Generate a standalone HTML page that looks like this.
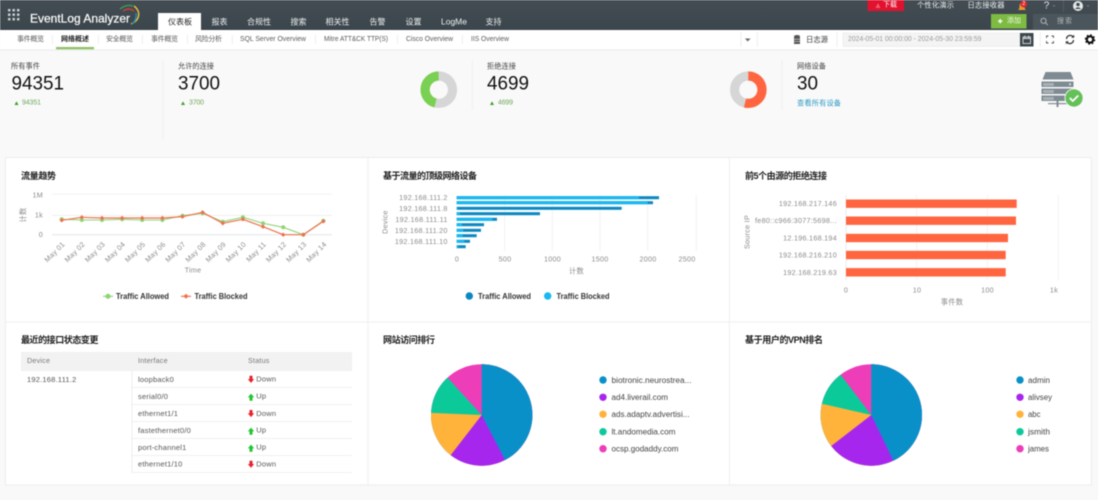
<!DOCTYPE html>
<html lang="zh"><head><meta charset="utf-8"><title>EventLog Analyzer</title>
<style>
html,body{margin:0;padding:0;width:1098px;height:500px;overflow:hidden;background:#f9f9f9}
svg{display:block;filter:blur(.42px)}
text{font-family:"Liberation Sans","Noto Sans CJK SC",sans-serif;dominant-baseline:central}
.n{font-size:8px;fill:#eef1f2}.sb{font-size:7px;fill:#5a5a5a}
.st{font-size:7.2px;fill:#444}.big{font-size:19px;fill:#111}.gr{font-size:7px;fill:#6fa85a}
.t{font-size:9px;font-weight:bold;fill:#1c1c1c}.ax{font-size:7.2px;fill:#8a8a8a;letter-spacing:.28px}
.lg{font-size:8px;fill:#333;font-weight:bold}.td{font-size:7.5px;fill:#555;letter-spacing:.2px}.th{font-size:7.2px;fill:#777;letter-spacing:.2px}
.pl{font-size:8px;fill:#444}
</style></head><body>
<svg width="1098" height="500" viewBox="0 0 1098 500" xmlns="http://www.w3.org/2000/svg">
<defs><linearGradient id="hd" x1="0" y1="0" x2="0" y2="1"><stop offset="0" stop-color="#434d53"/><stop offset="1" stop-color="#3b464c"/></linearGradient></defs>
<rect width="1098" height="500" fill="#f9f9f9"/>
<!-- header -->
<rect width="1098" height="30" fill="url(#hd)"/>
<g fill="#cfd4d6"><rect x="8" y="9" width="2.4" height="2.4"/><rect x="12.5" y="9" width="2.4" height="2.4"/><rect x="17" y="9" width="2.4" height="2.4"/><rect x="8" y="13.5" width="2.4" height="2.4"/><rect x="12.5" y="13.5" width="2.4" height="2.4"/><rect x="17" y="13.5" width="2.4" height="2.4"/><rect x="8" y="18" width="2.4" height="2.4"/><rect x="12.5" y="18" width="2.4" height="2.4"/><rect x="17" y="18" width="2.4" height="2.4"/></g>
<text x="30" y="18.5" font-size="12px" fill="#fff" stroke="#fff" stroke-width=".2" textLength="100" lengthAdjust="spacingAndGlyphs">EventLog Analyzer</text>
<g fill="none" stroke-width="1.4"><path d="M131 24Q140 20 138.500 12Q137 8 134 6" stroke="#e8c43a"/><path d="M120 9Q126 4 133 6" stroke="#3d9a5b"/><path d="M123 11Q129 7 134 11" stroke="#c9413b"/><path d="M132 24Q137 20 136 13" stroke="#2a87b8"/></g>
<rect x="158" y="13" width="43" height="17" fill="#fff"/>
<text x="168" y="22" font-size="8px" fill="#222" textLength="24">仪表板</text>
<text class="n" x="211.500" y="22" textLength="16">报表</text><text class="n" x="247" y="22" textLength="24">合规性</text><text class="n" x="290.500" y="22" textLength="16">搜索</text><text class="n" x="325.500" y="22" textLength="24">相关性</text><text class="n" x="369.500" y="22" textLength="16">告警</text><text class="n" x="405.500" y="22" textLength="16">设置</text><text class="n" x="441" y="22" textLength="26" lengthAdjust="spacingAndGlyphs">LogMe</text><text class="n" x="485.500" y="22" textLength="16">支持</text>
<!-- header right -->
<rect x="867.500" y="0" width="36.500" height="11" fill="#e0122f"/><path d="M878 3l2.500 5h-5z" fill="#f05a6a"/>
<text x="883" y="5" font-size="7px" fill="#fff" textLength="14">下载</text>
<text x="917" y="5" font-size="7.300px" fill="#eef1f2" textLength="37">个性化演示</text>
<text x="967.500" y="5" font-size="7.300px" fill="#eef1f2" textLength="37">日志接收器</text>
<path d="M1018 10q1.500-1 1.500-4t2.500-3.500q2.500.5 2.500 3.500t1.500 4z" fill="#e99a2b"/><circle cx="1023.800" cy="4" r="3.400" fill="#e0242f"/><text x="1023.800" y="4" font-size="5.500px" fill="#fff" text-anchor="middle">2</text>
<text x="1046.500" y="6" font-size="10px" fill="#e8ecee" text-anchor="middle">?</text><rect x="1053" y="5.500" width="2" height=".8" fill="#8a959a"/>
<rect x="1063" y="0" width=".8" height="12" fill="#566167"/>
<circle cx="1078" cy="6" r="5" fill="#e6eaec"/><circle cx="1078" cy="4.500" r="1.800" fill="#3f4a50"/><path d="M1074.800 9q3.200-3.500 6.400 0z" fill="#3f4a50"/><rect x="1087" y="5.500" width="2" height=".8" fill="#8a959a"/>
<rect x="991" y="14" width="35.500" height="14.500" fill="#7dbb42"/>
<path d="M998 21.200h4.400M1000.200 19v4.400" stroke="#fff" stroke-width="1.300"/>
<text x="1007" y="21.200" font-size="7px" fill="#f2f9ea" textLength="14">添加</text>
<rect x="1033" y="14" width="65" height="15.500" fill="#4b565c"/>
<circle cx="1043.500" cy="20.800" r="2.600" fill="none" stroke="#aab2b6"/><path d="M1045.500 22.800l2.200 2.200" stroke="#aab2b6"/>
<text x="1057" y="21.500" font-size="7px" fill="#aeb5b9" textLength="15">搜索</text>
<!-- subnav -->
<rect y="30" width="1098" height="19.500" fill="#fff"/><rect y="49.500" width="1098" height=".8" fill="#e6e6e6"/>
<g fill="#e8e8e8"><rect x="52" y="35" width=".7" height="9"/><rect x="98" y="35" width=".7" height="9"/><rect x="142" y="35" width=".7" height="9"/><rect x="187" y="35" width=".7" height="9"/><rect x="232" y="35" width=".7" height="9"/><rect x="315" y="35" width=".7" height="9"/><rect x="397" y="35" width=".7" height="9"/><rect x="462" y="35" width=".7" height="9"/><rect x="740.500" y="32" width=".7" height="15"/><rect x="757" y="32" width=".7" height="15"/><rect x="836.700" y="32" width=".7" height="15"/><rect x="1040" y="32" width=".7" height="15"/></g>
<text class="sb" x="17" y="39.500" textLength="27">事件概览</text>
<text x="61" y="39.500" font-size="7px" font-weight="bold" fill="#222" textLength="28">网络概述</text>
<rect x="56" y="47" width="38" height="2.300" fill="#8ec063"/>
<text class="sb" x="106" y="39.500" textLength="27">安全概览</text><text class="sb" x="151" y="39.500" textLength="27">事件概览</text><text class="sb" x="195" y="39.500" textLength="27">风险分析</text>
<text class="sb" x="240" y="39.500" textLength="66" lengthAdjust="spacingAndGlyphs">SQL Server Overview</text>
<text class="sb" x="324" y="39.500" textLength="64" lengthAdjust="spacingAndGlyphs">Mitre ATT&amp;CK TTP(S)</text>
<text class="sb" x="406" y="39.500" textLength="47" lengthAdjust="spacingAndGlyphs">Cisco Overview</text>
<text class="sb" x="471" y="39.500" textLength="38" lengthAdjust="spacingAndGlyphs">IIS Overview</text>
<path d="M745 38.500h5.500l-2.750 3z" fill="#666"/>
<g fill="#555"><ellipse cx="797" cy="36.300" rx="3" ry="1.300"/><rect x="794" y="37" width="6" height="7"/></g><path d="M794 39.300h6M794 41.500h6" stroke="#fff" stroke-width=".5"/>
<text x="806" y="39.500" font-size="7.300px" fill="#333" textLength="22">日志源</text>
<rect x="843" y="33" width="177" height="13.500" fill="#f4f4f4" stroke="#e4e4e4" stroke-width=".5"/>
<text x="848" y="39.500" font-size="7px" fill="#9a9a9a" textLength="133.500" lengthAdjust="spacingAndGlyphs">2024-05-01 00:00:00 - 2024-05-30 23:59:59</text>
<rect x="1020" y="33" width="13.500" height="13.500" fill="#3d474d"/><rect x="1023" y="37" width="7.500" height="6.500" fill="none" stroke="#d6dadc" stroke-width=".9"/><path d="M1023 38.500h7.500M1024.800 35.500v2.500M1028.700 35.500v2.500" stroke="#d6dadc" stroke-width=".9"/>
<path d="M1046.500 38v-2h2M1051.500 36h2v2M1053.500 41v2h-2M1048.500 43h-2v-2" fill="none" stroke="#555" stroke-width=".9"/>
<path d="M1066.500 39a3.700 3.700 0 0 1 6.500-2.300M1073.500 40a3.700 3.700 0 0 1-6.500 2.300" fill="none" stroke="#333" stroke-width="1.300"/><path d="M1074.200 34.800v3h-3zM1065.800 44.200v-3h3z" fill="#333"/>
<circle cx="1090" cy="39.500" r="3.200" fill="none" stroke="#111" stroke-width="2.200"/><circle cx="1090" cy="39.500" r="4.500" fill="none" stroke="#111" stroke-width="1.500" stroke-dasharray="1.700 1.830"/>
<!-- stats -->
<text class="st" x="11" y="66" textLength="29">所有事件</text>
<text class="big" x="11.500" y="84" textLength="52.500" lengthAdjust="spacingAndGlyphs">94351</text>
<path d="M14.500 105l2-3.600 2 3.600z" fill="#3aa227"/><text class="gr" x="22" y="103" textLength="19">94351</text>
<rect x="162.500" y="60" width=".7" height="80" fill="#ececec"/>
<text class="st" x="178" y="66" textLength="36">允许的连接</text>
<text class="big" x="178" y="84" textLength="42" lengthAdjust="spacingAndGlyphs">3700</text>
<path d="M181 105l2-3.600 2 3.600z" fill="#3aa227"/><text class="gr" x="189" y="103" textLength="15">3700</text>
<circle cx="438.800" cy="89.700" r="13.700" fill="none" stroke="#d6d6d6" stroke-width="9.200"/>
<circle cx="438.800" cy="89.700" r="13.700" fill="none" stroke="#79d052" stroke-width="9.200" pathLength="360" stroke-dasharray="166 360" transform="rotate(104 438.800 89.700)"/>
<rect x="472" y="60" width=".7" height="50" fill="#ececec"/>
<text class="st" x="487" y="66" textLength="29">拒绝连接</text>
<text class="big" x="487" y="84" textLength="42" lengthAdjust="spacingAndGlyphs">4699</text>
<path d="M490 105l2-3.600 2 3.600z" fill="#3aa227"/><text class="gr" x="498" y="103" textLength="15">4699</text>
<circle cx="748.300" cy="89.700" r="13.700" fill="none" stroke="#d6d6d6" stroke-width="9.200"/>
<circle cx="748.300" cy="89.700" r="13.700" fill="none" stroke="#ff6640" stroke-width="9.200" pathLength="360" stroke-dasharray="195 360" transform="rotate(-90 748.300 89.700)"/>
<rect x="781.600" y="60" width=".7" height="50" fill="#ececec"/>
<text class="st" x="797" y="66" textLength="29">网络设备</text>
<text class="big" x="797" y="84" textLength="21" lengthAdjust="spacingAndGlyphs">30</text>
<text x="797" y="103" font-size="7.200px" fill="#2b9ac4" textLength="44">查看所有设备</text>
<g fill="#7f8b92"><path d="M1045.500 72h25l3 7.500h-31z"/><rect x="1041.500" y="81.500" width="32" height="5.500"/><rect x="1041.500" y="88.500" width="32" height="5.500"/><rect x="1041.500" y="95.500" width="32" height="5.500"/><rect x="1056.500" y="101" width="2" height="6"/><rect x="1048" y="103" width="19" height="1.200"/></g>
<path d="M1044 83v3M1045.500 83v3M1047 83v3M1048.500 83v3M1050 83v3M1051.500 83v3M1053 83v3M1044 90v3M1045.500 90v3M1047 90v3M1048.500 90v3M1050 90v3M1051.500 90v3M1053 90v3M1044 97v3M1045.500 97v3M1047 97v3M1048.500 97v3M1050 97v3M1051.500 97v3M1053 97v3" stroke="#e8eaec" stroke-width=".6"/>
<circle cx="1070" cy="84.200" r="1" fill="#e8eaec"/>
<circle cx="1074" cy="98" r="9.500" fill="#fff"/><circle cx="1074" cy="98" r="8.700" fill="#66c05a"/><path d="M1069.800 98l3 3 5.500-5.500" fill="none" stroke="#fff" stroke-width="1.700"/>
<!-- cards -->
<rect x="5.500" y="157.500" width="1085.800" height="327.500" fill="#fff" stroke="#e9e9e9" stroke-width=".8"/>
<rect x="367.500" y="157.500" width=".8" height="327.500" fill="#ececec"/><rect x="729" y="157.500" width=".8" height="327.500" fill="#ececec"/><rect x="5.500" y="321.500" width="1085.800" height=".8" fill="#ececec"/>
<!-- line chart -->
<text class="t" x="21" y="176" textLength="35">流量趋势</text>
<path d="M52 194h280M52 215.300h280" stroke="#eeeeee" stroke-width=".8"/><path d="M52 234.700h280" stroke="#e4e8ec" stroke-width="1.200"/>
<text class="ax" x="43" y="195" text-anchor="end">1M</text><text class="ax" x="43" y="215" text-anchor="end">1k</text><text class="ax" x="43" y="234.500" text-anchor="end">0</text>
<text class="ax" transform="translate(23 215) rotate(-90)" text-anchor="middle">计数</text>
<text class="ax" transform="translate(63.500 243) rotate(-45)" text-anchor="end">May 01</text><text class="ax" transform="translate(83.600 243) rotate(-45)" text-anchor="end">May 02</text><text class="ax" transform="translate(103.800 243) rotate(-45)" text-anchor="end">May 03</text><text class="ax" transform="translate(123.900 243) rotate(-45)" text-anchor="end">May 04</text><text class="ax" transform="translate(144 243) rotate(-45)" text-anchor="end">May 05</text><text class="ax" transform="translate(164.200 243) rotate(-45)" text-anchor="end">May 06</text><text class="ax" transform="translate(184.300 243) rotate(-45)" text-anchor="end">May 07</text><text class="ax" transform="translate(204.400 243) rotate(-45)" text-anchor="end">May 08</text><text class="ax" transform="translate(224.600 243) rotate(-45)" text-anchor="end">May 09</text><text class="ax" transform="translate(244.700 243) rotate(-45)" text-anchor="end">May 10</text><text class="ax" transform="translate(264.800 243) rotate(-45)" text-anchor="end">May 11</text><text class="ax" transform="translate(285 243) rotate(-45)" text-anchor="end">May 12</text><text class="ax" transform="translate(305.100 243) rotate(-45)" text-anchor="end">May 13</text><text class="ax" transform="translate(325.200 243) rotate(-45)" text-anchor="end">May 14</text>
<text class="ax" x="193" y="270" text-anchor="middle" font-size="8px">Time</text>
<polyline fill="none" stroke="#92d67c" stroke-width="1.100" stroke-linejoin="round" points="61.700,219.300 81.800,220 102,220 122.100,219.300 142.200,220 162.400,220 182.500,215.700 202.600,213.300 222.800,221.700 242.900,217.300 263,223.300 283.200,227.300 303.300,234.700 323.400,220.700"/>
<g fill="#8fd474"><circle cx="61.700" cy="219.300" r="2"/><circle cx="81.800" cy="220" r="2"/><circle cx="102" cy="220" r="2"/><circle cx="122.100" cy="219.300" r="2"/><circle cx="142.200" cy="220" r="2"/><circle cx="162.400" cy="220" r="2"/><circle cx="182.500" cy="215.700" r="2"/><circle cx="202.600" cy="213.300" r="2"/><circle cx="222.800" cy="221.700" r="2"/><circle cx="242.900" cy="217.300" r="2"/><circle cx="263" cy="223.300" r="2"/><circle cx="283.200" cy="227.300" r="2"/><circle cx="303.300" cy="234.700" r="2"/><circle cx="323.400" cy="220.700" r="2"/></g>
<polyline fill="none" stroke="#ee7350" stroke-width="1.200" stroke-linejoin="round" points="61.700,220.300 81.800,217.300 102,218 122.100,218 142.200,218 162.400,218 182.500,216.700 202.600,212.300 222.800,223.300 242.900,219.300 263,226.700 283.200,234.700 303.300,234.700 323.400,221.300"/>
<g fill="#ef6f4c"><path d="M61.700 218.100l2.200 2.200-2.200 2.200-2.200-2.200z"/><path d="M81.800 215.100l2.200 2.200-2.200 2.200-2.200-2.200z"/><path d="M102 215.800l2.200 2.200-2.200 2.200-2.200-2.200z"/><path d="M122.100 215.800l2.200 2.200-2.200 2.200-2.200-2.200z"/><path d="M142.200 215.800l2.200 2.200-2.200 2.200-2.200-2.200z"/><path d="M162.400 215.800l2.200 2.200-2.200 2.200-2.200-2.200z"/><path d="M182.500 214.500l2.200 2.200-2.200 2.200-2.200-2.200z"/><path d="M202.600 210.100l2.200 2.200-2.200 2.200-2.200-2.200z"/><path d="M222.800 221.100l2.200 2.200-2.200 2.200-2.200-2.200z"/><path d="M242.900 217.100l2.200 2.200-2.200 2.200-2.200-2.200z"/><path d="M263 224.500l2.200 2.200-2.200 2.200-2.200-2.200z"/><path d="M283.200 232.500l2.200 2.200-2.200 2.200-2.200-2.200z"/><path d="M303.300 232.500l2.200 2.200-2.200 2.200-2.200-2.200z"/><path d="M323.400 219.100l2.200 2.200-2.200 2.200-2.200-2.200z"/></g>
<path d="M103 296.300h10" stroke="#92d67c" stroke-width="1.200"/><circle cx="108" cy="296.300" r="2.500" fill="#8fd474"/>
<text class="lg" x="116" y="296.300" textLength="53" lengthAdjust="spacingAndGlyphs">Traffic Allowed</text>
<path d="M181 296.300h10" stroke="#ee7350" stroke-width="1.200"/><path d="M186 293.800l2.500 2.500-2.500 2.500-2.500-2.500z" fill="#ef6f4c"/>
<text class="lg" x="194.500" y="296.300" textLength="53" lengthAdjust="spacingAndGlyphs">Traffic Blocked</text>
<!-- stacked bars -->
<text class="t" x="383" y="176" textLength="94">基于流量的顶级网络设备</text>
<path d="M504.700 195v56M552.300 195v56M600 195v56M647.700 195v56M696.300 195v56" stroke="#efefef" stroke-width=".8"/>
<g fill="#0b87c0"><rect x="456.700" y="196.200" width="202.300" height="3"/><rect x="456.700" y="201.200" width="196.300" height="3"/><rect x="456.700" y="206.800" width="165" height="3"/><rect x="456.700" y="212.200" width="83.300" height="3"/><rect x="456.700" y="217.800" width="40.300" height="3"/><rect x="456.700" y="223.200" width="27.300" height="3"/><rect x="456.700" y="228.800" width="24.300" height="3"/><rect x="456.700" y="234.200" width="20" height="3"/><rect x="456.700" y="239.800" width="13.300" height="3"/><rect x="456.700" y="245.200" width="9" height="3"/></g>
<g fill="#18b8f2"><rect x="456.700" y="196.200" width="182.300" height="3"/><rect x="456.700" y="201.200" width="191" height="3"/><rect x="456.700" y="206.800" width="1" height="3"/><rect x="456.700" y="212.200" width="3.300" height="3"/><rect x="456.700" y="217.800" width="35.700" height="3"/><rect x="456.700" y="223.200" width="5.300" height="3"/><rect x="456.700" y="228.800" width="6.700" height="3"/><rect x="456.700" y="234.200" width="6" height="3"/><rect x="456.700" y="239.800" width="7.700" height="3"/><rect x="456.700" y="245.200" width="1.700" height="3"/></g>
<text class="ax" x="447.700" y="197.700" text-anchor="end">192.168.111.2</text><text class="ax" x="447.700" y="208.300" text-anchor="end">192.168.111.8</text><text class="ax" x="447.700" y="219.300" text-anchor="end">192.168.111.11</text><text class="ax" x="447.700" y="230.300" text-anchor="end">192.168.111.20</text><text class="ax" x="447.700" y="241.300" text-anchor="end">192.168.111.10</text>
<text class="ax" transform="translate(385 222) rotate(-90)" text-anchor="middle" font-size="8px">Device</text>
<text class="ax" x="457" y="259" text-anchor="middle">0</text><text class="ax" x="505" y="259" text-anchor="middle">500</text><text class="ax" x="552.500" y="259" text-anchor="middle">1000</text><text class="ax" x="600" y="259" text-anchor="middle">1500</text><text class="ax" x="648" y="259" text-anchor="middle">2000</text><text class="ax" x="687" y="259" text-anchor="middle">2500</text>
<text class="ax" x="576.500" y="271" text-anchor="middle">计数</text>
<circle cx="469.300" cy="296" r="3.700" fill="#0b87c0"/><text class="lg" x="478" y="296.300" textLength="53" lengthAdjust="spacingAndGlyphs">Traffic Allowed</text>
<circle cx="547.700" cy="296" r="3.700" fill="#18b8f2"/><text class="lg" x="556.500" y="296.300" textLength="53" lengthAdjust="spacingAndGlyphs">Traffic Blocked</text>
<!-- orange bars -->
<text class="t" x="745" y="176" textLength="82">前5个由源的拒绝连接</text>
<path d="M846 195v85" stroke="#e8e8e8" stroke-width=".8"/><path d="M916.700 195v85M987.300 195v85M1058.300 195v85" stroke="#efefef" stroke-width=".8"/>
<g fill="#ff6640"><rect x="846" y="199.500" width="170.700" height="8.400"/><rect x="846" y="216.500" width="170" height="8.400"/><rect x="846" y="233.800" width="162" height="8.400"/><rect x="846" y="250.800" width="159.700" height="8.400"/><rect x="846" y="268.100" width="159.700" height="8.400"/></g>
<text class="ax" x="837" y="203.700" text-anchor="end">192.168.217.146</text><text class="ax" x="837" y="220.700" text-anchor="end">fe80::c966:3077:5698...</text><text class="ax" x="837" y="238" text-anchor="end">12.196.168.194</text><text class="ax" x="837" y="255" text-anchor="end">192.168.216.210</text><text class="ax" x="837" y="272.300" text-anchor="end">192.168.219.63</text>
<text class="ax" transform="translate(747 232) rotate(-90)" text-anchor="middle" font-size="8px">Source IP</text>
<text class="ax" x="846" y="290" text-anchor="middle">0</text><text class="ax" x="917" y="290" text-anchor="middle">10</text><text class="ax" x="987.500" y="290" text-anchor="middle">100</text><text class="ax" x="1054" y="290" text-anchor="middle">1k</text>
<text class="ax" x="952" y="302" text-anchor="middle">事件数</text>
<!-- table -->
<text class="t" x="21" y="340" textLength="77.500">最近的接口状态变更</text>
<rect x="21" y="352" width="331" height="19" fill="#f2f2f2"/>
<text class="th" x="27" y="360.700">Device</text><text class="th" x="138" y="360.700">Interface</text><text class="th" x="248" y="360.700">Status</text>
<rect x="131.500" y="371" width=".7" height="102" fill="#e6e6e6"/>
<path d="M132 387.500h220M132 404.500h220M132 421.500h220M132 438.500h220M132 455.500h220M132 472.500h220" stroke="#ececec" stroke-width=".7"/>
<text class="td" x="27" y="379.300">192.168.111.2</text>
<text class="td" x="138" y="379.300">loopback0</text><text class="td" x="138" y="396.500">serial0/0</text><text class="td" x="138" y="413.500">ethernet1/1</text><text class="td" x="138" y="430.500">fastethernet0/0</text><text class="td" x="138" y="447.500">port-channel1</text><text class="td" x="138" y="464">ethernet1/10</text>
<g fill="#e8212b"><path d="M249.500 375.800h3v3.300h1.700l-3.200 3.800-3.200-3.800h1.700z"/><path d="M249.500 410h3v3.300h1.700l-3.200 3.800-3.200-3.800h1.700z"/><path d="M249.500 460.700h3v3.300h1.700l-3.200 3.800-3.200-3.800h1.700z"/></g>
<g fill="#1fc62e"><path d="M249.500 400.700h3v-3.300h1.700l-3.200-3.800-3.200 3.800h1.700z"/><path d="M249.500 434.700h3v-3.300h1.700l-3.200-3.800-3.200 3.800h1.700z"/><path d="M249.500 451.700h3v-3.300h1.700l-3.200-3.800-3.200 3.800h1.700z"/></g>
<text class="td" x="256.300" y="379">Down</text><text class="td" x="256.300" y="396">Up</text><text class="td" x="256.300" y="413.500">Down</text><text class="td" x="256.300" y="430">Up</text><text class="td" x="256.300" y="447">Up</text><text class="td" x="256.300" y="464">Down</text>
<!-- pie 1 -->
<text class="t" x="383" y="340" textLength="52">网站访问排行</text>
<g fill="none" stroke-width="50.700">
<circle cx="481.700" cy="415" r="25.350" stroke="#ee3db8"/>
<circle cx="481.700" cy="415" r="25.350" stroke="#0cc99a" pathLength="360" stroke-dasharray="319.100 360" transform="rotate(-90 481.700 415)"/>
<circle cx="481.700" cy="415" r="25.350" stroke="#ffb33b" pathLength="360" stroke-dasharray="273.800 360" transform="rotate(-90 481.700 415)"/>
<circle cx="481.700" cy="415" r="25.350" stroke="#a726ee" pathLength="360" stroke-dasharray="218.800 360" transform="rotate(-90 481.700 415)"/>
<circle cx="481.700" cy="415" r="25.350" stroke="#0a90c8" pathLength="360" stroke-dasharray="153.300 360" transform="rotate(-90 481.700 415)"/>
</g>
<circle cx="603" cy="380" r="3.700" fill="#0a90c8"/><circle cx="603" cy="397.300" r="3.700" fill="#a726ee"/><circle cx="603" cy="414.300" r="3.700" fill="#ffb33b"/><circle cx="603" cy="431.700" r="3.700" fill="#0cc99a"/><circle cx="603" cy="448.700" r="3.700" fill="#ee3db8"/>
<text class="pl" x="611.500" y="380.300" textLength="80" lengthAdjust="spacingAndGlyphs">biotronic.neurostrea...</text>
<text class="pl" x="611.500" y="397.700" textLength="56.500" lengthAdjust="spacingAndGlyphs">ad4.liverail.com</text>
<text class="pl" x="611.500" y="414.700" textLength="78" lengthAdjust="spacingAndGlyphs">ads.adaptv.advertisi...</text>
<text class="pl" x="611.500" y="432" textLength="64" lengthAdjust="spacingAndGlyphs">lt.andomedia.com</text>
<text class="pl" x="611.500" y="449" textLength="67" lengthAdjust="spacingAndGlyphs">ocsp.godaddy.com</text>
<!-- pie 2 -->
<text class="t" x="745" y="340" textLength="78">基于用户的VPN排名</text>
<g fill="none" stroke-width="50.700">
<circle cx="871.300" cy="415" r="25.350" stroke="#ee3db8"/>
<circle cx="871.300" cy="415" r="25.350" stroke="#0cc99a" pathLength="360" stroke-dasharray="324.200 360" transform="rotate(-90 871.300 415)"/>
<circle cx="871.300" cy="415" r="25.350" stroke="#ffb33b" pathLength="360" stroke-dasharray="284.200 360" transform="rotate(-90 871.300 415)"/>
<circle cx="871.300" cy="415" r="25.350" stroke="#a726ee" pathLength="360" stroke-dasharray="233.400 360" transform="rotate(-90 871.300 415)"/>
<circle cx="871.300" cy="415" r="25.350" stroke="#0a90c8" pathLength="360" stroke-dasharray="155 360" transform="rotate(-90 871.300 415)"/>
</g>
<circle cx="1020" cy="380" r="3.700" fill="#0a90c8"/><circle cx="1020" cy="397.300" r="3.700" fill="#a726ee"/><circle cx="1020" cy="414.300" r="3.700" fill="#ffb33b"/><circle cx="1020" cy="431.700" r="3.700" fill="#0cc99a"/><circle cx="1020" cy="448.700" r="3.700" fill="#ee3db8"/>
<text class="pl" x="1028" y="380.300" textLength="22" lengthAdjust="spacingAndGlyphs">admin</text>
<text class="pl" x="1028" y="397.700" textLength="24" lengthAdjust="spacingAndGlyphs">alivsey</text>
<text class="pl" x="1028" y="414.700" textLength="12.500" lengthAdjust="spacingAndGlyphs">abc</text>
<text class="pl" x="1028" y="432" textLength="22" lengthAdjust="spacingAndGlyphs">jsmith</text>
<text class="pl" x="1028" y="449" textLength="21" lengthAdjust="spacingAndGlyphs">james</text>
</svg>
</body></html>
